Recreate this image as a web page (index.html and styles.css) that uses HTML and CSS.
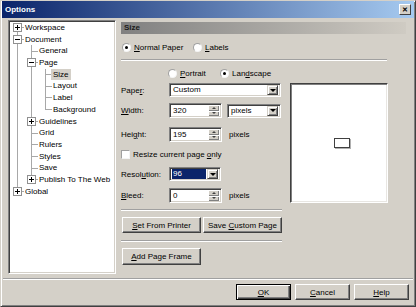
FILE: index.html
```html
<!DOCTYPE html>
<html lang="en">
<head>
    <meta charset="UTF-8">
    <title>Options</title>
    <link rel="stylesheet" href="styles.css">
</head>
<body>
    <div class="window">
        <div class="titlebar">
            <span class="title">Options</span>
            <span class="close">&#x2715;</span>
        </div>

        <div class="main">
            <div class="tree">
                <div class="tree-row"><span class="g s"><span class="box plus"></span></span><span class="lbl">Workspace</span></div>
                <div class="tree-row"><span class="g t"><span class="box"></span></span><span class="lbl">Document</span></div>
                <div class="tree-row"><span class="g v"></span><span class="g t"></span><span class="lbl">General</span></div>
                <div class="tree-row"><span class="g v"></span><span class="g t"><span class="box"></span></span><span class="lbl">Page</span></div>
                <div class="tree-row"><span class="g v"></span><span class="g v"></span><span class="g t"></span><span class="lbl selected">Size</span></div>
                <div class="tree-row"><span class="g v"></span><span class="g v"></span><span class="g t"></span><span class="lbl">Layout</span></div>
                <div class="tree-row"><span class="g v"></span><span class="g v"></span><span class="g t"></span><span class="lbl">Label</span></div>
                <div class="tree-row"><span class="g v"></span><span class="g v"></span><span class="g e"></span><span class="lbl">Background</span></div>
                <div class="tree-row"><span class="g v"></span><span class="g t"><span class="box plus"></span></span><span class="lbl">Guidelines</span></div>
                <div class="tree-row"><span class="g v"></span><span class="g t"></span><span class="lbl">Grid</span></div>
                <div class="tree-row"><span class="g v"></span><span class="g t"></span><span class="lbl">Rulers</span></div>
                <div class="tree-row"><span class="g v"></span><span class="g t"></span><span class="lbl">Styles</span></div>
                <div class="tree-row"><span class="g v"></span><span class="g t"></span><span class="lbl">Save</span></div>
                <div class="tree-row"><span class="g v"></span><span class="g e"><span class="box plus"></span></span><span class="lbl">Publish To The Web</span></div>
                <div class="tree-row"><span class="g e"><span class="box plus"></span></span><span class="lbl">Global</span></div>
            </div>

            <div class="panel">
                <div class="panel-head">Size</div>

                <div class="paper-type">
                    <div class="opt normal"><span class="radio on"></span><span><u>N</u>ormal Paper</span></div>
                    <div class="opt"><span class="radio"></span><span><u>L</u>abels</span></div>
                </div>

                <div class="sep wide"></div>

                <div class="orient">
                    <div class="opt portrait"><span class="radio"></span><span><u>P</u>ortrait</span></div>
                    <div class="opt"><span class="radio on"></span><span>Lan<u>d</u>scape</span></div>
                </div>

                <div class="setup">
                    <div class="fields">
                        <div class="field paper">
                            <span class="name">Pape<u>r</u>:</span>
                            <div class="select paper-select"><span class="val">Custom</span><span class="drop"></span></div>
                        </div>
                        <div class="field width">
                            <span class="name"><u>W</u>idth:</span>
                            <div class="input"><span class="val">320</span><span class="spin"><span class="up"></span><span class="down"></span></span></div>
                            <div class="select unit-select"><span class="val">pixels</span><span class="drop"></span></div>
                        </div>
                        <div class="field height">
                            <span class="name">Hei<u>g</u>ht:</span>
                            <div class="input"><span class="val">195</span><span class="spin"><span class="up"></span><span class="down"></span></span></div>
                            <span class="unit">pixels</span>
                        </div>
                        <div class="field resize">
                            <span class="check"></span>
                            <span>Resize current page <u>o</u>nly</span>
                        </div>
                        <div class="field resolution">
                            <span class="name">Resol<u>u</u>tion:</span>
                            <div class="select res-select"><span class="val sel">96</span><span class="drop"></span></div>
                        </div>
                        <div class="field bleed">
                            <span class="name"><u>B</u>leed:</span>
                            <div class="input"><span class="val">0</span><span class="spin"><span class="up"></span><span class="down"></span></span></div>
                            <span class="unit">pixels</span>
                        </div>
                    </div>
                    <div class="preview">
                        <div class="thumb"></div>
                    </div>
                </div>

                <div class="sep short"></div>

                <div class="btn-row">
                    <button class="btn wide-btn"><span><u>S</u>et From Printer</span></button>
                    <button class="btn wide-btn"><span>Save <u>C</u>ustom Page</span></button>
                </div>

                <div class="sep short sep-frame"></div>

                <div class="btn-row frame-row">
                    <button class="btn wide-btn tall"><span><u>A</u>dd Page Frame</span></button>
                </div>
            </div>
        </div>

        <div class="footer">
            <div class="sep"></div>
            <div class="footer-btns">
                <button class="btn dlg default"><span><u>O</u>K</span></button>
                <button class="btn dlg"><span><u>C</u>ancel</span></button>
                <button class="btn dlg"><span><u>H</u>elp</span></button>
            </div>
        </div>
    </div>
</body>
</html>
```

FILE: styles.css
```css
body {
    margin: 0;
    font-family: "Liberation Sans", Arial, sans-serif;
    font-size: 8px;
    color: #000;
    background-color: #d4d0c8;
}

u {
    text-underline-offset: 1px;
}

.window {
    width: 416px;
    height: 307px;
    box-sizing: border-box;
    background-color: #d4d0c8;
    border: 1px solid;
    border-color: #d4d0c8 #404040 #404040 #d4d0c8;
    box-shadow: inset 1px 1px #fff, inset -1px -1px #808080;
    display: flex;
    flex-direction: column;
}

/* title bar */
.titlebar {
    height: 17px;
    margin: 0 1px;
    padding: 0 3px;
    box-sizing: border-box;
    background: linear-gradient(to right, #0a246a, #a6caf0);
    display: flex;
    align-items: center;
    justify-content: space-between;
}

.title {
    color: #fff;
    font-weight: bold;
}

.close {
    width: 12px;
    height: 11px;
    box-sizing: border-box;
    background-color: #d4d0c8;
    border: 1px solid;
    border-color: #fff #404040 #404040 #fff;
    display: flex;
    align-items: center;
    justify-content: center;
    font-size: 7px;
    font-weight: bold;
    line-height: 1;
}

.main {
    display: flex;
    height: 256px;
    padding-left: 7px;
}

/* tree */
.tree {
    margin-top: 2px;
    width: 108px;
    height: 254px;
    box-sizing: border-box;
    padding: 1px;
    background-color: #fff;
    border: 1px solid;
    border-color: #808080 #fff #fff #808080;
    box-shadow: inset 1px 1px #404040, inset -1px -1px #d4d0c8;
}

.tree-row {
    display: flex;
    height: 11.7px;
    line-height: 11.7px;
    white-space: nowrap;
}

.g {
    width: 14px;
    flex: none;
    display: flex;
    align-items: center;
    justify-content: center;
    background-repeat: no-repeat;
}

.g.v {
    background-image: linear-gradient(#a8a8a8, #a8a8a8);
    background-size: 1px 100%;
    background-position: 7px 0;
}

.g.t {
    background-image: linear-gradient(#a8a8a8, #a8a8a8), linear-gradient(#a8a8a8, #a8a8a8);
    background-size: 1px 100%, 7px 1px;
    background-position: 7px 0, 7px 50%;
}

.g.e {
    background-image: linear-gradient(#a8a8a8, #a8a8a8), linear-gradient(#a8a8a8, #a8a8a8);
    background-size: 1px 50%, 7px 1px;
    background-position: 7px 0, 7px 50%;
}

.g.s {
    background-image: linear-gradient(#a8a8a8, #a8a8a8), linear-gradient(#a8a8a8, #a8a8a8);
    background-size: 1px 50%, 7px 1px;
    background-position: 7px 100%, 7px 50%;
}

.box {
    width: 9px;
    height: 9px;
    box-sizing: border-box;
    border: 1px solid #909090;
    background-color: #fff;
    background-image: linear-gradient(#000, #000);
    background-size: 5px 1px;
    background-position: center;
    background-repeat: no-repeat;
}

.box.plus {
    background-image: linear-gradient(#000, #000), linear-gradient(#000, #000);
    background-size: 5px 1px, 1px 5px;
}

.lbl {
    padding: 0 2px;
    margin-left: -1px;
}

.lbl.selected {
    background-color: #d4d0c8;
}

/* right panel */
.panel {
    margin-left: 5px;
    margin-top: 4px;
    width: 285px;
    display: flex;
    flex-direction: column;
}

.panel-head {
    height: 12px;
    line-height: 12px;
    padding-left: 3px;
    font-weight: bold;
    color: #1a1a1a;
    background: linear-gradient(to right, #808080, #cfcbc3);
}

.opt {
    display: flex;
    align-items: center;
    gap: 3px;
}

.radio {
    width: 9px;
    height: 9px;
    flex: none;
    box-sizing: border-box;
    border-radius: 50%;
    background-color: #fff;
    border: 1px solid;
    border-color: #a0a0a0 #f4f4f4 #f4f4f4 #a0a0a0;
    display: flex;
    align-items: center;
    justify-content: center;
}

.radio.on::after {
    content: "";
    width: 3px;
    height: 3px;
    border-radius: 50%;
    background-color: #000;
}

.paper-type {
    display: flex;
    height: 12px;
    margin-top: 7px;
    padding-left: 1px;
}

.opt.normal {
    width: 71px;
}

.sep {
    height: 0;
    border-top: 1px solid #a0a0a0;
    border-bottom: 1px solid #fff;
}

.sep.wide {
    width: 266px;
    margin-top: 6px;
}

.orient {
    display: flex;
    height: 12px;
    margin-top: 6px;
    padding-left: 47px;
}

.opt.portrait {
    width: 52px;
}

.setup {
    display: flex;
    margin-top: 4px;
}

.fields {
    width: 161px;
    flex: none;
}

.field {
    display: flex;
    align-items: center;
}

.field .name {
    width: 48px;
    flex: none;
}

.field.width {
    margin-top: 6px;
}

.field.height {
    margin-top: 9px;
}

.field.resize {
    height: 11px;
    margin-top: 7px;
    gap: 3px;
}

.field.resolution {
    margin-top: 7px;
}

.field.bleed {
    margin-top: 7px;
}

.select, .input {
    display: flex;
    align-items: center;
    box-sizing: border-box;
    height: 14px;
    padding: 2px;
    background-color: #fff;
    border: 1px solid;
    border-color: #808080 #fff #fff #808080;
    box-shadow: inset 1px 1px #404040, inset -1px -1px #d4d0c8;
}

.select .val, .input .val {
    flex: 1;
    padding-left: 1px;
    line-height: 10px;
}

.paper-select {
    width: 112px;
}

.unit-select {
    width: 54px;
    margin-left: 5px;
}

.res-select {
    width: 52px;
}

.val.sel {
    background-color: #0a246a;
    color: #fff;
    margin-right: 1px;
}

.drop {
    width: 11px;
    height: 10px;
    flex: none;
    box-sizing: border-box;
    background-color: #d4d0c8;
    border: 1px solid;
    border-color: #d4d0c8 #404040 #404040 #d4d0c8;
    box-shadow: inset 1px 1px #fff, inset -1px -1px #808080;
    display: flex;
    align-items: center;
    justify-content: center;
}

.drop::after {
    content: "";
    border-left: 3px solid transparent;
    border-right: 3px solid transparent;
    border-top: 3px solid #000;
}

.input {
    width: 53px;
    height: 15px;
}

.spin {
    width: 11px;
    height: 11px;
    flex: none;
    display: flex;
    flex-direction: column;
}

.spin span {
    flex: 1;
    background-color: #d4d0c8;
    box-shadow: inset 1px 1px #fff, inset -1px -1px #808080;
    display: flex;
    align-items: center;
    justify-content: center;
}

.spin .up::after {
    content: "";
    border-left: 2px solid transparent;
    border-right: 2px solid transparent;
    border-bottom: 2px solid #404040;
}

.spin .down::after {
    content: "";
    border-left: 2px solid transparent;
    border-right: 2px solid transparent;
    border-top: 2px solid #404040;
}

.unit {
    margin-left: 7px;
}

.check {
    width: 9px;
    height: 9px;
    flex: none;
    box-sizing: border-box;
    background-color: #fff;
    border: 1px solid;
    border-color: #a0a0a0 #f4f4f4 #f4f4f4 #a0a0a0;
}

.preview {
    margin-left: 8px;
    width: 98px;
    height: 120px;
    box-sizing: border-box;
    background-color: #fff;
    border: 1px solid;
    border-color: #404040 #fff #fff #404040;
    box-shadow: inset 1px 1px #808080, inset -1px -1px #e8e6e2;
    display: flex;
    align-items: center;
    justify-content: center;
}

.thumb {
    width: 16px;
    height: 10px;
    margin-left: 6px;
    box-sizing: border-box;
    border: 1px solid #404040;
    background-color: #fff;
    box-shadow: 1px 1px 0 0 #b0b0b0;
}

.sep.short {
    width: 161px;
    margin-top: 6px;
}

.sep.sep-frame {
    margin-top: 7px;
}

.btn-row {
    display: flex;
    gap: 2px;
    margin-top: 6px;
    padding-left: 1px;
}

.btn {
    height: 16px;
    padding: 0;
    box-sizing: border-box;
    font-family: inherit;
    font-size: 8px;
    color: #000;
    background-color: #d4d0c8;
    border: 1px solid;
    border-color: #fff #404040 #404040 #fff;
    box-shadow: inset -1px -1px #808080;
    display: flex;
    align-items: center;
    justify-content: center;
}

.wide-btn {
    width: 79px;
}

.btn.tall {
    height: 17px;
}

.footer {
    padding: 4px 2px 0;
}

.footer-btns {
    display: flex;
    justify-content: flex-end;
    gap: 4px;
    margin-top: 4px;
    padding-right: 4px;
}

.btn.dlg {
    width: 55px;
}

.btn.default {
    border-color: #000;
    box-shadow: inset 1px 1px #fff, inset -1px -1px #404040, inset -2px -2px #808080;
}
```
